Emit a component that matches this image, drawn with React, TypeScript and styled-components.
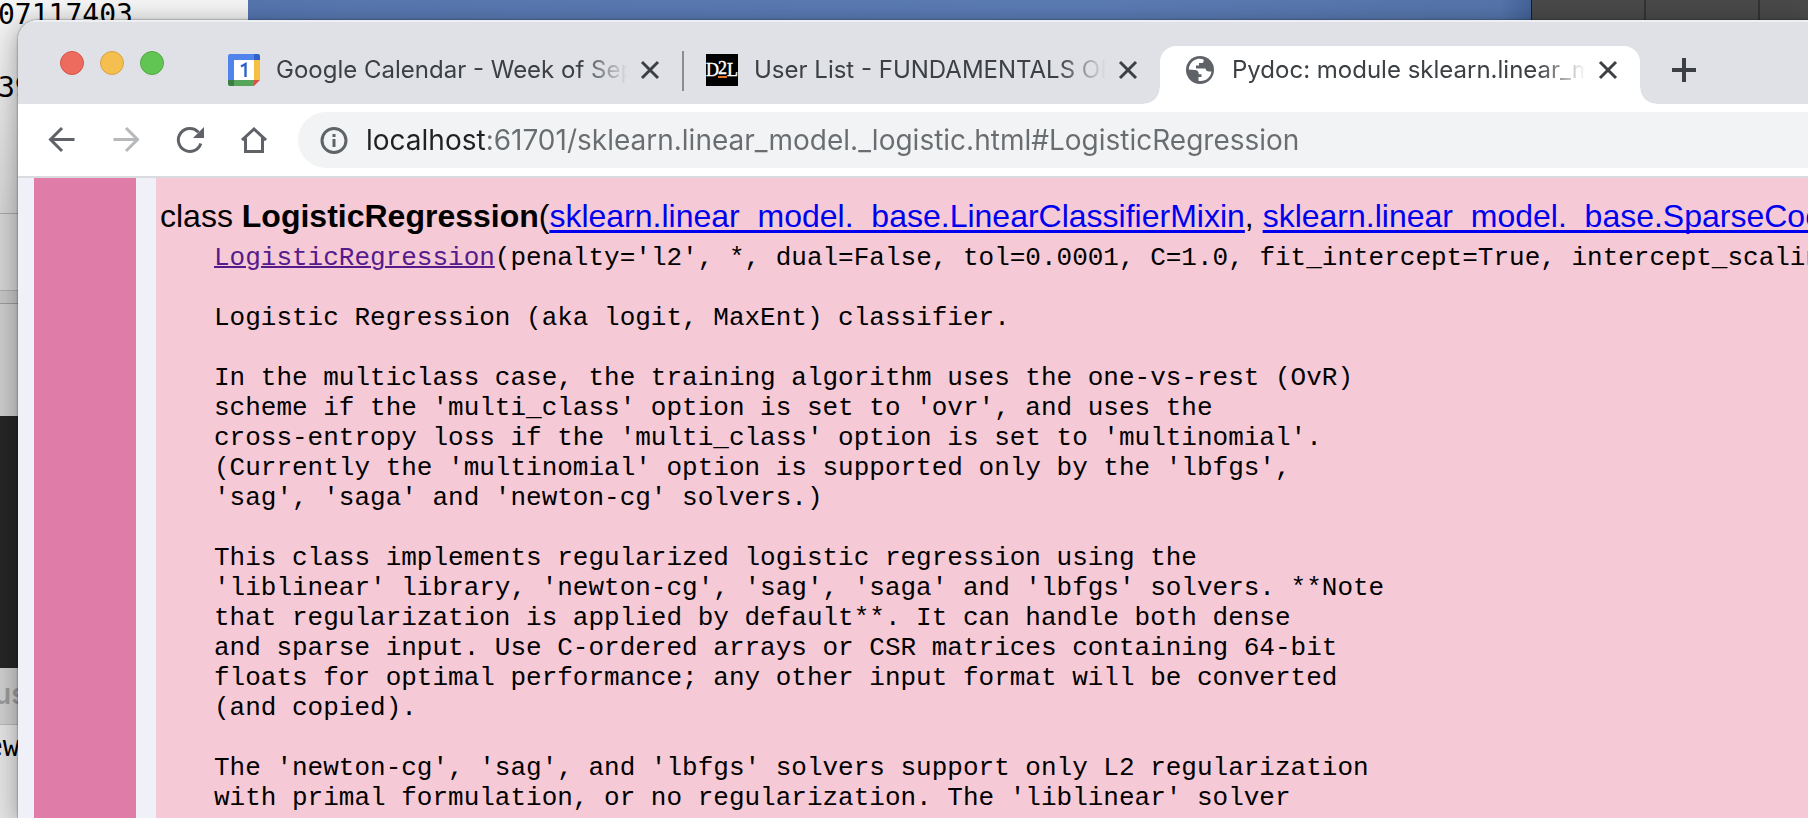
import React from "react";
import styled, { createGlobalStyle } from "styled-components";

const uiFont = `Inter, Roboto, sans-serif`;

const GlobalStyle = createGlobalStyle`
  * { box-sizing: border-box; }
  body { margin: 0; overflow: hidden; }
  button { border: 0; padding: 0; background: none; font: inherit; color: inherit; cursor: pointer; }
`;

const Desktop = styled.main`
  position: relative;
  height: 100vh;
  overflow: hidden;
  padding: 20px 0 0 18px;
  background: linear-gradient(90deg, #4a6ea8 0, #5877b0 340px, #5b7bb4 60%, #5574aa 83%, #3f5f93 85%);
`;

const BackWindow = styled.section`
  position: absolute;
  inset: 0 auto 0 0;
  width: 248px;
  background: #d0d0d0;
`;

const Band = styled.div<{ $top: number; $height: number; $bg: string; $line?: string }>`
  position: absolute;
  left: 0;
  right: 0;
  top: ${(p) => p.$top}px;
  height: ${(p) => p.$height}px;
  background: ${(p) => p.$bg};
  border-bottom: 1px solid ${(p) => p.$line ?? "transparent"};
`;

const BackText = styled.span<{ $top: number; $left: number; $muted?: boolean }>`
  position: absolute;
  top: ${(p) => p.$top}px;
  left: ${(p) => p.$left}px;
  font-family: ${(p) => (p.$muted ? uiFont : `"DejaVu Sans Mono", monospace`)};
  font-size: 28px;
  font-weight: ${(p) => (p.$muted ? 600 : 400)};
  line-height: 32px;
  color: ${(p) => (p.$muted ? "#999" : "#000")};
  white-space: nowrap;
`;

const DarkWindow = styled.section`
  position: absolute;
  inset: 0 0 0 84.7%;
  background: repeating-linear-gradient(90deg, #494949 0 112px, #333 112px 114px);
  border-left: 1px solid #1d1d1d;
`;

const Browser = styled.section`
  position: relative;
  height: 100%;
  display: flex;
  flex-direction: column;
  border-radius: 20px 0 0 0;
  overflow: hidden;
  background: #fff;
  box-shadow: 0 0 2px rgba(0, 0, 0, 0.6), 0 4px 24px rgba(0, 0, 0, 0.35);
`;

const TabStrip = styled.header`
  display: flex;
  flex: none;
  height: 84px;
  padding-left: 42px;
  background: #dfe1e6;
  border-top: 2px solid #eeeff2;
  font-family: ${uiFont};
`;

const Lights = styled.div`
  display: flex;
  gap: 16px;
  width: 144px;
  padding-top: 29px;
`;

const Light = styled.button<{ $color: string; $edge: string }>`
  width: 24px;
  height: 24px;
  border-radius: 50%;
  background: ${(p) => p.$color};
  border: 1px solid ${(p) => p.$edge};
`;

const TabList = styled.div`
  display: flex;
  align-items: flex-end;
`;

const Tab = styled.div<{ $active?: boolean; $divided?: boolean }>`
  position: relative;
  display: flex;
  align-items: center;
  width: ${(p) => (p.$active ? 480 : 478)}px;
  height: 58px;
  padding: 0 16px 10px 24px;
  border-radius: 16px 16px 0 0;
  background: ${(p) => (p.$active ? "#fff" : "transparent")};
  color: #3c4043;

  ${(p) =>
    p.$divided &&
    `&::after {
      content: "";
      position: absolute;
      right: -2px;
      top: 5px;
      width: 2px;
      height: 40px;
      background: #8b8d92;
    }`}

  ${(p) =>
    p.$active &&
    `&::before, &::after {
      content: "";
      position: absolute;
      bottom: 0;
      width: 16px;
      height: 16px;
    }
    &::before { left: -16px; background: radial-gradient(circle at 0 0, transparent 15px, #fff 16px); }
    &::after { right: -16px; background: radial-gradient(circle at 100% 0, transparent 15px, #fff 16px); }`}
`;

const TabButton = styled.button`
  flex: 1;
  min-width: 0;
  display: flex;
  align-items: center;
  gap: 16px;
  margin-right: 6px;
  text-align: left;
  svg { flex: none; }
`;

const TabTitle = styled.span`
  flex: 1;
  min-width: 0;
  overflow: hidden;
  white-space: nowrap;
  font-size: 24px;
  line-height: 32px;
  mask-image: linear-gradient(90deg, #000 calc(100% - 48px), transparent);
`;

const IconButton = styled.button<{ $faded?: boolean }>`
  flex: none;
  width: 32px;
  height: 32px;
  color: #5f6368;
  opacity: ${(p) => (p.$faded ? 0.45 : 1)};
  svg { display: block; }
`;

const DarkIconButton = styled(IconButton)`
  color: #3c4043;
`;

const NewTab = styled(DarkIconButton)`
  margin: 32px 0 0 28px;
`;

const Toolbar = styled.nav`
  display: flex;
  flex: none;
  align-items: center;
  gap: 32px;
  height: 74px;
  padding-left: 28px;
  border-bottom: 2px solid #d9dbde;
  background: #fff;
`;

const AddressBar = styled.label`
  flex: 1;
  display: flex;
  align-items: center;
  gap: 16px;
  height: 56px;
  margin-left: -4px;
  padding-left: 20px;
  border-radius: 28px 0 0 28px;
  background: #f1f3f4;
  color: #5f6368;
  svg { flex: none; }
`;

const AddressInput = styled.input`
  flex: 1;
  min-width: 0;
  height: 40px;
  padding: 0;
  border: 0;
  outline: 0;
  font-family: ${uiFont};
  font-size: 28px;
  color: transparent;
  background: linear-gradient(90deg, #202124 122px, #6a6d70 122px);
  background-clip: text;
  -webkit-background-clip: text;
`;

const Page = styled.article`
  flex: 1;
  min-height: 0;
  overflow: hidden;
  display: grid;
  grid-template-columns: 102px minmax(0, 1fr);
  column-gap: 20px;
  padding-left: 16px;
  background: #f0f0f8;
`;

const Gutter = styled.div`
  background: #df7da8;
`;

const Doc = styled.div`
  overflow: hidden;
  padding: 20px 0 0 4px;
  background: #f5c9d6;
  color: #000;
`;

const ClassHeading = styled.h2`
  margin: 0;
  font: 400 32px/36px "Liberation Sans", Arial, sans-serif;
  white-space: nowrap;
`;

const BaseLink = styled.a`
  color: #0000ee;
  text-decoration: underline 3px;
  text-underline-offset: 3px;
  text-decoration-skip-ink: none;
`;

const SelfLink = styled.a`
  color: #551a8b;
  text-decoration: underline 2px;
`;

const DocText = styled.pre`
  margin: 9px 0 0 54px;
  font: 400 26px/30px "Liberation Mono", "Courier New", monospace;
`;

const stroke = { fill: "none", stroke: "currentColor", strokeWidth: 3 } as const;

const Icon = ({ children }: { children: React.ReactNode }) => (
  <svg width="32" height="32" viewBox="0 0 32 32" aria-hidden="true">
    {children}
  </svg>
);

const CalendarIcon = () => (
  <Icon>
    <path d="M2 0H26V6H6V26H0V2Q0 0 2 0Z" fill="#5083ec" />
    <path d="M26 0H30Q32 0 32 2V6H26Z" fill="#2e62c9" />
    <path d="M26 6H32V26H26Z" fill="#f4bf42" />
    <path d="M6 26H26V32H6Z" fill="#56a55b" />
    <path d="M0 26H6V32H2Q0 32 0 30Z" fill="#3c7d40" />
    <path d="M26 26H32L26 32Z" fill="#dd5144" />
    <path d="M6 6H26V26H6Z" fill="#fff" />
    <path d="M13 12.5L17.5 10V23" fill="none" stroke="#2e62c9" strokeWidth="2.4" />
  </Icon>
);

const D2LIcon = () => (
  <Icon>
    <rect width="32" height="32" fill="#000" />
    <g fontFamily="'Liberation Serif', serif" fontSize="18" fill="#fff" stroke="#fff" strokeWidth="0.4">
      <text x="0" y="22">D</text>
      <text x="12" y="20">2</text>
      <text x="21" y="22">L</text>
    </g>
    <rect x="12" y="22" width="9" height="2" fill="#e87722" />
  </Icon>
);

const GlobeIcon = () => (
  <Icon>
    <circle cx="16" cy="16" r="14" fill="#5f6368" />
    <path
      d="M14.500 4.800C9 5.600 5 10.300 4.800 15.500L11 16C13.500 16.200 14.800 17.500 14.800 20.300H17.500V23H14.500V26.800C21 28 27 23.500 27.400 17.500H25C23 17.500 22 16.800 21.500 14.500H12V11.500H15V9H18.500C19.500 8.500 19.800 7 19.500 5.400C18 4.800 16.200 4.600 14.500 4.800Z"
      fill="#fff"
    />
  </Icon>
);

const CloseIcon = () => (
  <Icon>
    <path d="M8 8L24 24M24 8L8 24" {...stroke} />
  </Icon>
);

const PlusIcon = () => (
  <Icon>
    <path d="M16 4V28M4 16H28" {...stroke} strokeWidth={4} />
  </Icon>
);

const BackIcon = () => (
  <Icon>
    <path d="M16 4L4.500 15.500L16 27M5 15.500H28.500" {...stroke} />
  </Icon>
);

const ForwardIcon = () => (
  <Icon>
    <path d="M16 4L27.500 15.500L16 27M27 15.500H3.500" {...stroke} />
  </Icon>
);

const ReloadIcon = () => (
  <Icon>
    <path d="M24.500 8.300A11.500 11.500 0 1 0 26.800 19.500" {...stroke} />
    <path d="M30 3V14H19Z" fill="currentColor" />
  </Icon>
);

const HomeIcon = () => (
  <Icon>
    <path d="M4 16.200L16 5L28 16.200M7.500 14V27.500H24.500V14" {...stroke} />
  </Icon>
);

const InfoIcon = () => (
  <Icon>
    <circle cx="16" cy="16.500" r="12" {...stroke} />
    <path d="M16 15V23M16 10V13" {...stroke} />
  </Icon>
);

const tabs = [
  { title: "Google Calendar - Week of Sep", icon: <CalendarIcon />, divided: true },
  { title: "User List - FUNDAMENTALS OF", icon: <D2LIcon /> },
  { title: "Pydoc: module sklearn.linear_m", icon: <GlobeIcon />, active: true },
];

const docBody = `

Logistic Regression (aka logit, MaxEnt) classifier.

In the multiclass case, the training algorithm uses the one-vs-rest (OvR)
scheme if the 'multi_class' option is set to 'ovr', and uses the
cross-entropy loss if the 'multi_class' option is set to 'multinomial'.
(Currently the 'multinomial' option is supported only by the 'lbfgs',
'sag', 'saga' and 'newton-cg' solvers.)

This class implements regularized logistic regression using the
'liblinear' library, 'newton-cg', 'sag', 'saga' and 'lbfgs' solvers. **Note
that regularization is applied by default**. It can handle both dense
and sparse input. Use C-ordered arrays or CSR matrices containing 64-bit
floats for optimal performance; any other input format will be converted
(and copied).

The 'newton-cg', 'sag', and 'lbfgs' solvers support only L2 regularization
with primal formulation, or no regularization. The 'liblinear' solver`;

export default function App() {
  return (
    <Desktop>
      <GlobalStyle />
      <BackWindow>
        <Band $top={0} $height={214} $bg="linear-gradient(#f4f4f4, #e6e6e6 40%, #d2d2d2)" $line="#a5a5a5" />
        <Band $top={214} $height={77} $bg="#d2d2d2" $line="#aaa" />
        <Band $top={291} $height={13} $bg="#c4c4c4" $line="#999" />
        <Band $top={304} $height={112} $bg="#cbcbcb" />
        <Band $top={416} $height={252} $bg="#252525" />
        <Band $top={668} $height={57} $bg="#cccccc" $line="#b5b5b5" />
        <Band $top={725} $height={93} $bg="#e2e2e2" />
        <BackText $top={-1} $left={-2}>07117403</BackText>
        <BackText $top={72} $left={-2}>39</BackText>
        <BackText $top={678} $left={-6} $muted>us</BackText>
        <BackText $top={731} $left={-14}>ew</BackText>
      </BackWindow>
      <DarkWindow />
      <Browser>
        <TabStrip>
          <Lights>
            <Light $color="#ed6a5e" $edge="#d35549" aria-label="Close window" />
            <Light $color="#f5bf4f" $edge="#d6a243" aria-label="Minimize window" />
            <Light $color="#61c554" $edge="#52a842" aria-label="Zoom window" />
          </Lights>
          <TabList role="tablist">
            {tabs.map((t) => (
              <Tab key={t.title} $active={t.active} $divided={t.divided}>
                <TabButton role="tab" aria-selected={!!t.active}>
                  {t.icon}
                  <TabTitle>{t.title}</TabTitle>
                </TabButton>
                <DarkIconButton aria-label="Close tab">
                  <CloseIcon />
                </DarkIconButton>
              </Tab>
            ))}
          </TabList>
          <NewTab aria-label="New tab">
            <PlusIcon />
          </NewTab>
        </TabStrip>
        <Toolbar>
          <IconButton aria-label="Back"><BackIcon /></IconButton>
          <IconButton aria-label="Forward" $faded><ForwardIcon /></IconButton>
          <IconButton aria-label="Reload"><ReloadIcon /></IconButton>
          <IconButton aria-label="Home"><HomeIcon /></IconButton>
          <AddressBar>
            <InfoIcon />
            <AddressInput
              aria-label="Address"
              defaultValue="localhost:61701/sklearn.linear_model._logistic.html#LogisticRegression"
            />
          </AddressBar>
        </Toolbar>
        <Page>
          <Gutter />
          <Doc>
            <ClassHeading>
              class <strong>LogisticRegression</strong>(
              <BaseLink href="#LinearClassifierMixin">sklearn.linear_model._base.LinearClassifierMixin</BaseLink>,{" "}
              <BaseLink href="#SparseCoefMixin">sklearn.linear_model._base.SparseCoefMixin</BaseLink>
            </ClassHeading>
            <DocText>
              <SelfLink href="#LogisticRegression">LogisticRegression</SelfLink>
              {"(penalty='l2', *, dual=False, tol=0.0001, C=1.0, fit_intercept=True, intercept_scaling=1"}
              {docBody}
            </DocText>
          </Doc>
        </Page>
      </Browser>
    </Desktop>
  );
}
